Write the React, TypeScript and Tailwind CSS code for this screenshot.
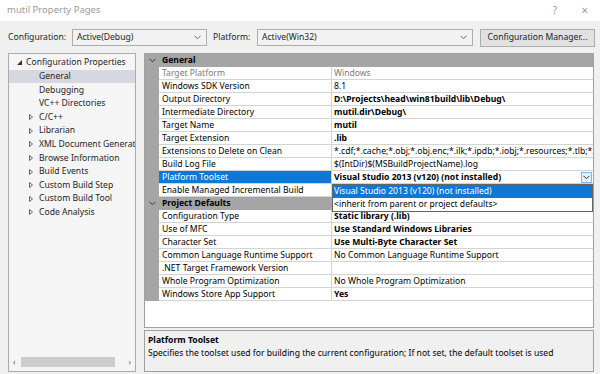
import React from "react";

type Row = { name: string; value: string; bold?: boolean; gray?: boolean };

const general: Row[] = [
  { name: "Target Platform", value: "Windows", gray: true },
  { name: "Windows SDK Version", value: "8.1" },
  { name: "Output Directory", value: "D:\\Projects\\head\\win81build\\lib\\Debug\\", bold: true },
  { name: "Intermediate Directory", value: "mutil.dir\\Debug\\", bold: true },
  { name: "Target Name", value: "mutil", bold: true },
  { name: "Target Extension", value: ".lib", bold: true },
  { name: "Extensions to Delete on Clean", value: "*.cdf;*.cache;*.obj;*.obj.enc;*.ilk;*.ipdb;*.iobj;*.resources;*.tlb;*.tli;*.tlh;*.tmp" },
  { name: "Build Log File", value: "$(IntDir)$(MSBuildProjectName).log" },
];

const defaults: Row[] = [
  { name: "Configuration Type", value: "Static library (.lib)", bold: true },
  { name: "Use of MFC", value: "Use Standard Windows Libraries", bold: true },
  { name: "Character Set", value: "Use Multi-Byte Character Set", bold: true },
  { name: "Common Language Runtime Support", value: "No Common Language Runtime Support" },
  { name: ".NET Target Framework Version", value: "" },
  { name: "Whole Program Optimization", value: "No Whole Program Optimization" },
  { name: "Windows Store App Support", value: "Yes", bold: true },
];

const tree = [
  { label: "General", indent: true, selected: true },
  { label: "Debugging", indent: true },
  { label: "VC++ Directories", indent: true },
  { label: "C/C++", arrow: true },
  { label: "Librarian", arrow: true },
  { label: "XML Document Generator", arrow: true },
  { label: "Browse Information", arrow: true },
  { label: "Build Events", arrow: true },
  { label: "Custom Build Step", arrow: true },
  { label: "Custom Build Tool", arrow: true },
  { label: "Code Analysis", arrow: true },
];

function Chevron({ className = "" }: { className?: string }) {
  return (
    <svg width="7" height="5" viewBox="0 0 7 5" className={className}>
      <path d="M0.5 0.8 L3.5 3.8 L6.5 0.8" fill="none" stroke="currentColor" strokeWidth="1" />
    </svg>
  );
}

function Combo({ label, w }: { label: string; w: string }) {
  return (
    <div className={`${w} h-[17px] border border-[#adadad] bg-[#f2f2f2] flex items-center justify-between pl-[4px] pr-[5px]`}>
      <span>{label}</span>
      <Chevron className="text-[#6a6a6a]" />
    </div>
  );
}

function GridRow({ row }: { row: Row }) {
  return (
    <div className="flex h-[13px]">
      <div className="w-[14px] bg-[#a5a5a5]" />
      <div className={`w-[173px] border-b border-r border-[#d4d4d4] bg-white pl-[3px] leading-[12px] truncate ${row.gray ? "text-[#7a7a7a]" : "text-black"}`}>
        {row.name}
      </div>
      <div className={`w-[261px] border-b border-[#d4d4d4] bg-white pl-[2px] leading-[12px] whitespace-nowrap overflow-hidden ${row.bold ? "font-bold" : ""} ${row.gray ? "text-[#7a7a7a]" : "text-black"}`}>
        {row.value}
      </div>
    </div>
  );
}

function Section({ title }: { title: string }) {
  return (
    <div className="flex h-[13px] bg-[#a5a5a5] items-center">
      <div className="w-[14px] flex justify-center">
        <Chevron className="text-[#333]" />
      </div>
      <span className="pl-[3px] font-bold text-black">{title}</span>
    </div>
  );
}

export default function App() {
  return (
    <div className="w-[600px] h-[374px] bg-[#f0f0f0] overflow-hidden flex flex-col text-[8.6px] text-[#1e1e1e] font-['Noto_Sans','Noto_Sans_CJK_SC',sans-serif]">
      {/* title bar */}
      <div className="h-[21px] bg-white flex items-center justify-between pl-[7px] pr-[12px] text-[#9a9a9a] text-[9.5px]">
        <span>mutil Property Pages</span>
        <div className="flex items-center gap-[24px] text-[10px]">
          <span>?</span>
          <span className="text-[12px]">×</span>
        </div>
      </div>

      {/* configuration row */}
      <div className="flex items-center mt-[8px] h-[17px] pl-[8px]">
        <span className="w-[64px]">Configuration:</span>
        <Combo label="Active(Debug)" w="w-[135px]" />
        <span className="ml-[6px] w-[44px]">Platform:</span>
        <Combo label="Active(Win32)" w="w-[216px]" />
        <div className="ml-[7px] w-[115px] h-[18px] border border-[#adadad] bg-[#e1e1e1] flex items-center justify-center">
          Configuration Manager...
        </div>
      </div>

      <div className="flex mt-[7px] pl-[8px] gap-[8px]">
        {/* tree */}
        <div className="w-[128px] h-[319px] border border-[#acacac] bg-[#f5f5f5] flex flex-col pt-[2px] overflow-hidden">
          <div className="h-[13.6px] flex items-center pl-[8px] gap-[4px]">
            <svg width="5" height="5" viewBox="0 0 5 5" className="shrink-0">
              <path d="M5 0 L5 5 L0 5 Z" fill="#333" />
            </svg>
            <span>Configuration Properties</span>
          </div>
          {tree.map((t) => (
            <div
              key={t.label}
              className={`h-[13.6px] flex items-center pl-[20px] whitespace-nowrap overflow-hidden ${t.selected ? "bg-[#d6d8e1]" : ""}`}
            >
              <span className="w-[10px] shrink-0 flex items-center">
                {t.arrow && (
                  <svg width="4" height="6" viewBox="0 0 4 6">
                    <path d="M0.5 0.5 L3.5 3 L0.5 5.5 Z" fill="none" stroke="#555" strokeWidth="0.9" />
                  </svg>
                )}
              </span>
              <span>{t.label}</span>
            </div>
          ))}
          <div className="flex-1" />
          <div className="h-[11px] mb-[4px] flex items-center px-[4px] text-[#555]">
            <span className="text-[8px] w-[8px]">‹</span>
            <div className="w-[94px] h-[10px] bg-[#cdcdcd]" />
            <div className="flex-1" />
            <span className="text-[8px]">›</span>
          </div>
        </div>

        {/* grid + description */}
        <div className="w-[450px] flex flex-col">
          <div className="relative h-[275px] border border-[#a0a0a0] bg-white">
            <Section title="General" />
            {general.map((r) => (
              <GridRow key={r.name} row={r} />
            ))}
            {/* selected row with combo */}
            <div className="flex h-[13px]">
              <div className="w-[14px] bg-[#a5a5a5]" />
              <div className="w-[173px] bg-[#0f78d4] text-white pl-[3px] leading-[12px] border-b border-r border-[#d4d4d4]">
                Platform Toolset
              </div>
              <div className="w-[261px] flex items-center justify-between bg-white border-b border-[#d4d4d4] pl-[2px] pr-[1px] font-bold text-black">
                <span className="leading-[12px]">Visual Studio 2013 (v120) (not installed)</span>
                <div className="w-[11px] h-[11px] border border-[#7eb4ea] bg-[#e5f1fb] flex items-center justify-center text-[#333]">
                  <Chevron />
                </div>
              </div>
            </div>
            <GridRow row={{ name: "Enable Managed Incremental Build", value: "" }} />
            <Section title="Project Defaults" />
            {defaults.map((r) => (
              <GridRow key={r.name} row={r} />
            ))}

            {/* dropdown list */}
            <div className="absolute top-[130px] left-[187px] w-[261px] h-[28px] border border-[#646464] bg-white text-black flex flex-col">
              <div className="h-[13px] bg-[#0f78d4] text-white pl-[1px] leading-[13px]">
                Visual Studio 2013 (v120) (not installed)
              </div>
              <div className="h-[13px] pl-[1px] leading-[13px]">&lt;inherit from parent or project defaults&gt;</div>
            </div>
          </div>

          <div className="mt-[2px] h-[42px] border border-[#a0a0a0] bg-[#f0f0f0] pl-[3px] pt-[3px] text-black">
            <div className="font-bold leading-[13px]">Platform Toolset</div>
            <div className="leading-[13px]">
              Specifies the toolset used for building the current configuration; If not set, the default toolset is used
            </div>
          </div>
        </div>
      </div>
    </div>
  );
}
